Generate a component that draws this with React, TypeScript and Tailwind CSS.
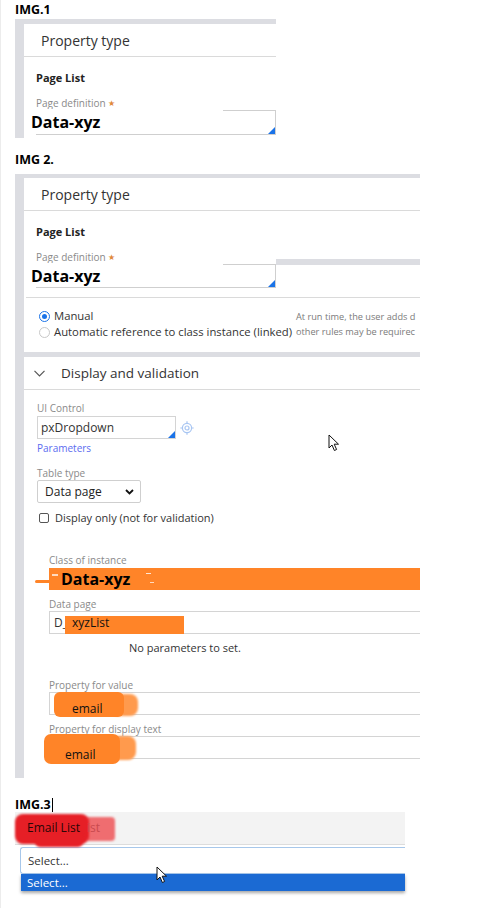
import React from "react";

const label = "text-[10px] leading-[14px] text-[#8a8a8a]";

function Corner() {
  return (
    <svg className="absolute right-0 bottom-0" width="7" height="7" viewBox="0 0 7 7">
      <polygon points="7,0 7,7 0,7" fill="#1a73e8" />
    </svg>
  );
}

function Pointer({ className }: { className: string }) {
  return (
    <svg className={className} width="12" height="18" viewBox="0 0 12 18">
      <path
        d="M1 1 L1 14 L4 11 L6.4 16.5 L8.6 15.5 L6.2 10.2 L10.5 10.2 Z"
        fill="white"
        stroke="#111"
        strokeWidth="1"
        strokeLinejoin="round"
      />
    </svg>
  );
}

function PageDefinition({ big }: { big?: boolean }) {
  return (
    <>
      <div className="mt-[14px] text-[11px] font-bold leading-[14px] text-[#222]">Page List</div>
      <div className={`mt-[11px] ${label} flex items-center`}>
        Page definition
        <span className="ml-[2px] text-[8px] text-[#e08a3c]">★</span>
      </div>
      <div className={`relative ${big ? "h-[24px]" : "h-[25px]"} border-t border-r border-b border-[#cfcfcf]`}>
        <div className="absolute left-[-8px] top-[-2px] w-[195px] h-[24px] bg-white flex items-center pl-[3px] pt-[1px] text-[16px] font-bold text-black">
          Data-xyz
        </div>
        <Corner />
      </div>
    </>
  );
}

function Field({ children }: { children?: React.ReactNode }) {
  return (
    <div className="relative h-[23px] border-t border-l border-b border-[#d4d4d4] flex items-center pl-[4px] text-[12px] text-[#333]">
      {children}
    </div>
  );
}

export default function App() {
  return (
    <div className="relative w-[487px] h-[908px] overflow-hidden bg-white border-l border-[#ececec] font-['Open_Sans',sans-serif] text-[#333]">
      {/* IMG.1 */}
      <div className="pl-[14px]">
        <div className="pt-[3px] h-[19px] text-[12.5px] font-bold leading-[14px] text-black">IMG.1</div>
        <div className="w-[261px] h-[119px] bg-[#dcdde2] pt-[5px] pl-[9px]">
          <div className="h-full bg-white">
            <div className="h-[33px] border-b border-[#dadada] pl-[17px] pt-[1px] flex items-center text-[14px] text-[#333]">
              Property type
            </div>
            <div className="pl-[12px]">
              <PageDefinition />
            </div>
          </div>
        </div>
      </div>

      {/* IMG 2 */}
      <div className="pl-[14px]">
        <div className="pt-[15px] h-[36px] text-[12.5px] font-bold leading-[14px] text-black">IMG 2.</div>
        <div className="w-[405px] h-[604px] bg-[#dcdde2] pt-[4px] pl-[9px] flex flex-col overflow-hidden">
          <div className="bg-white">
            <div className="h-[33px] border-b border-[#dadada] pl-[17px] pt-[1px] flex items-center text-[14px] text-[#333]">
              Property type
            </div>
            <div className="flex">
              <div className="w-[252px] pl-[12px]">
                <PageDefinition big />
              </div>
              <div className="flex-1">
                <div className="mt-[48px] h-[6px] bg-[#dcdde2]" />
              </div>
            </div>
            <div className="ml-[2px] h-[10px] border-b border-[#dadada]" />
            <div className="h-[54px] pt-[10px] pl-[15px] flex">
              <div className="w-[257px] text-[11.3px] leading-[16px] text-[#333]">
                <div className="flex items-center">
                  <span className="w-[11px] h-[11px] rounded-full border border-[#1a73e8] flex items-center justify-center mr-[4px]">
                    <span className="w-[5px] h-[5px] rounded-full bg-[#1a73e8]" />
                  </span>
                  Manual
                </div>
                <div className="flex items-center whitespace-nowrap">
                  <span className="w-[11px] h-[11px] rounded-full border border-[#c8c8c8] mr-[4px]" />
                  Automatic reference to class instance (linked)
                </div>
              </div>
              <div className="flex-1 whitespace-nowrap text-[9.2px] leading-[15px] text-[#7a7a7a] pt-[1px]">
                <div>At run time, the user adds d</div>
                <div>other rules may be requirec</div>
              </div>
            </div>
          </div>

          <div className="h-[5px]" />

          <div className="flex-1 bg-white">
            <div className="h-[33px] border-b border-[#dadada] pl-[10px] flex items-center gap-[16px] text-[13.5px] text-[#333]">
              <svg width="11" height="7" viewBox="0 0 11 7" fill="none" stroke="#555" strokeWidth="1.2">
                <path d="M0.5 0.8 L5.5 5.8 L10.5 0.8" />
              </svg>
              Display and validation
            </div>
            <div className="pl-[13px]">
              <div className={`mt-[11px] ${label}`}>UI Control</div>
              <div className="mt-[1px] flex items-center">
                <div className="relative w-[139px] h-[23px] border border-[#d4d4d4] flex items-center pl-[3px] text-[12px] text-[#333]">
                  pxDropdown
                  <Corner />
                </div>
                <svg className="ml-[4px]" width="14" height="14" viewBox="0 0 14 14" fill="none" stroke="#a9c6f2" strokeWidth="1.2">
                  <circle cx="7" cy="7" r="4.6" />
                  <circle cx="7" cy="7" r="2" />
                  <path d="M7 0.3v2M7 11.7v2M0.3 7h2M11.7 7h2" />
                </svg>
              </div>
              <div className="mt-[2px] text-[10px] leading-[14px] text-[#5b6cf0]">Parameters</div>
              <div className={`mt-[11px] ${label}`}>Table type</div>
              <div className="w-[104px] h-[23px] border border-[#cfcfcf] rounded-[2px] flex items-center justify-between pl-[7px] pr-[6px] text-[12px] text-[#222]">
                Data page
                <svg width="9" height="6" viewBox="0 0 9 6" fill="none" stroke="#111" strokeWidth="1.8">
                  <path d="M1 1 L4.5 4.5 L8 1" />
                </svg>
              </div>
              <div className="mt-[7px] h-[16px] flex items-center text-[11px] text-[#333]">
                <span className="ml-[2px] mr-[6px] w-[10px] h-[10px] border border-[#555] rounded-[2px]" />
                Display only (not for validation)
              </div>

              <div className="pl-[12px]">
                <div className={`mt-[27px] ${label}`}>Class of instance</div>
                <div className="relative mt-[1px] h-[22px] bg-[#ff8428] flex items-center pl-[12px] text-[16px] font-bold text-black">
                  <span className="absolute left-[-14px] top-[12px] w-[16px] h-[3px] rounded-l-full bg-[#ff8428]" />
                  <span className="absolute left-[3px] top-[6px] w-[6px] h-[2px] bg-white/70" />
                  <span className="absolute left-[97px] top-[5px] w-[5px] h-[1px] bg-white/80" />
                  <span className="absolute left-[101px] top-[14px] w-[4px] h-[1px] bg-white/70" />
                  Data-xyz
                </div>
                <div className={`mt-[7px] ${label}`}>Data page</div>
                <Field>
                  D_
                  <span className="absolute left-[15px] top-[4px] w-[119px] h-[18px] bg-[#ff8428] pl-[7px] text-[12px] leading-[13px] text-[#111]">
                    xyzList
                  </span>
                </Field>
                <div className="mt-[7px] pl-[80px] text-[11px] leading-[14px] text-[#333]">No parameters to set.</div>
                <div className={`mt-[23px] ${label}`}>Property for value</div>
                <Field>
                  <span className="absolute left-[60px] top-[1px] w-[28px] h-[22px] rounded-[8px] bg-[#ff9a4d] blur-[1px]" />
                  <span className="absolute left-[4px] top-[-1px] w-[70px] h-[25px] rounded-[6px] bg-[#ff8428] blur-[0.6px]" />
                  <span className="absolute left-[22px] top-[9px] text-[12px] leading-[14px] text-[#111]">email</span>
                </Field>
                <div className={`mt-[7px] ${label}`}>Property for display text</div>
                <Field>
                  <span className="absolute left-[60px] top-[-1px] w-[26px] h-[24px] rounded-[8px] bg-[#ff9a4d] blur-[1px]" />
                  <span className="absolute left-[-6px] top-[-3px] w-[76px] h-[30px] rounded-[7px] bg-[#ff8428] blur-[0.6px]" />
                  <span className="absolute left-[15px] top-[11px] text-[12px] leading-[14px] text-[#111]">email</span>
                </Field>
              </div>
            </div>
          </div>
        </div>
      </div>

      {/* IMG.3 */}
      <div className="pl-[14px]">
        <div className="pt-[20px] h-[34px] flex items-start">
          <span className="text-[12.5px] font-bold leading-[14px] text-black">IMG.3</span>
          <span className="ml-[1px] w-[1px] h-[14px] bg-black" />
        </div>
        <div className="relative w-[390px] h-[33px] bg-[#f3f3f3] border-b border-[#dcdcdc]">
          <span className="absolute left-[70px] top-[5px] w-[30px] h-[24px] rounded-[4px] bg-[#ef6d70] blur-[0.8px]" />
          <span className="absolute left-[0px] top-[2px] w-[74px] h-[30px] rounded-[8px] bg-[#e61f26] blur-[0.8px]" />
          <span className="absolute left-[20px] top-[20px] w-[48px] h-[15px] rounded-[5px] bg-[#e61f26] blur-[0.8px]" />
          <span className="absolute left-[12px] top-[9px] text-[12px] leading-[14px] text-[#2a0606]">Email List</span>
          <span className="absolute left-[72px] top-[9px] text-[12px] leading-[14px] text-[#c94a4e]">ist</span>
        </div>
        <div className="mt-[2px] ml-[5px] w-[385px] h-[27px] border border-[#a7c7ea] border-r-0 rounded-l-[3px] flex items-center pl-[7px] text-[11.5px] text-[#333]">
          Select...
        </div>
        <div className="ml-[6px] w-[384px] h-[17px] bg-[#1b6ad3] flex items-center pl-[6px] text-[11.5px] text-white shadow-[0_2px_3px_rgba(0,0,0,0.35)]">
          Select...
        </div>
      </div>

      <Pointer className="absolute left-[327px] top-[434px]" />
      <Pointer className="absolute left-[155px] top-[866px]" />
    </div>
  );
}
